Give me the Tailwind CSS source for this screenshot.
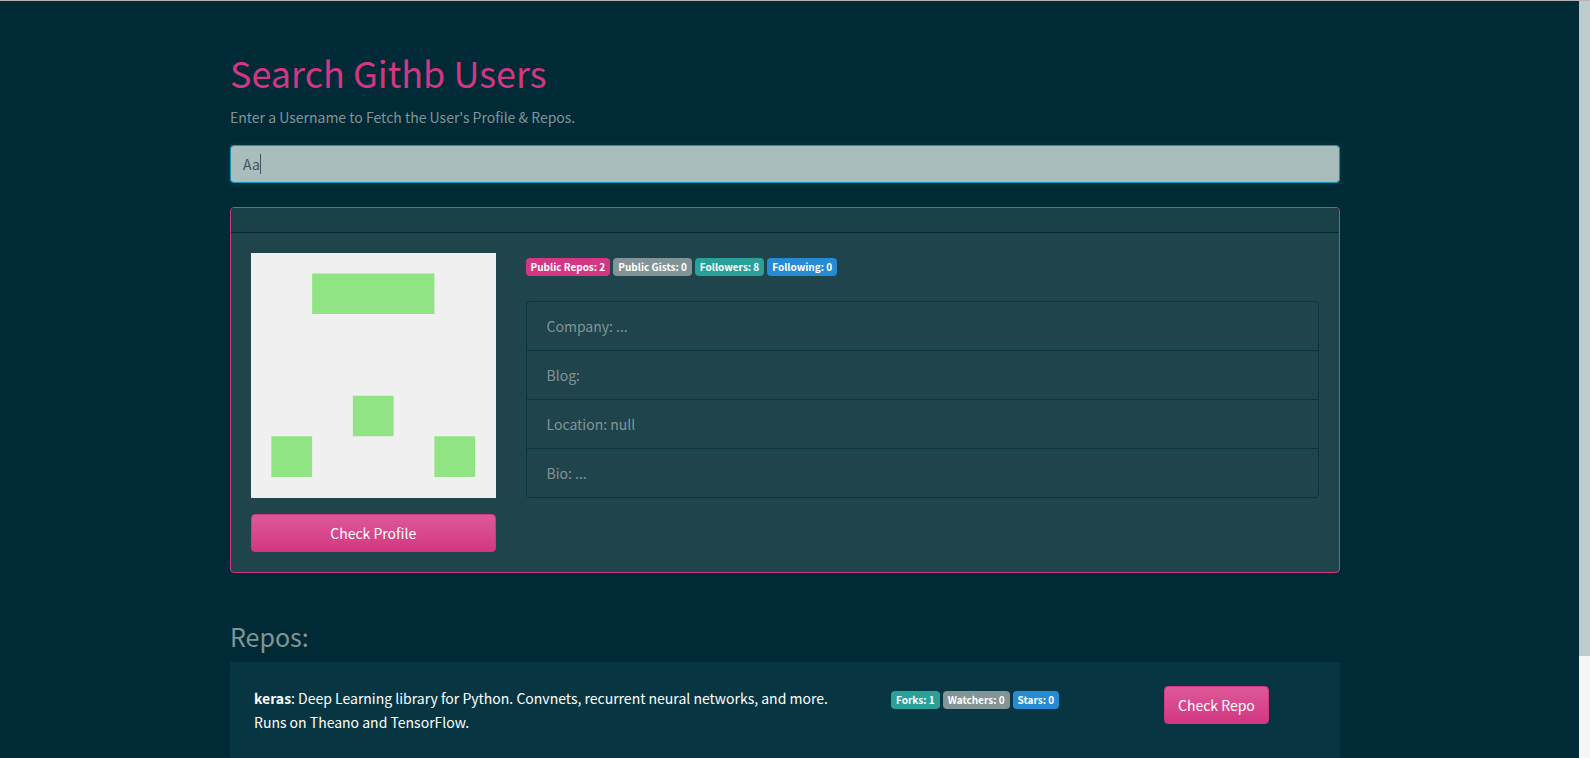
<!DOCTYPE html>
<html lang="en">
<head>
<meta charset="utf-8">
<meta name="viewport" content="width=device-width, initial-scale=1">
<title>Search Githb Users</title>
<script src="https://cdn.jsdelivr.net/npm/@tailwindcss/browser@4"></script>
</head>
<body class="flex h-screen overflow-hidden border-t border-[#b4b4b4] bg-[#002b36] font-['Noto_Sans_CJK_SC','Noto_Sans',sans-serif] text-[14px] leading-6 text-[#839496]">
  <div class="min-w-0 flex-1 overflow-hidden pr-[9px]">
    <main class="mx-auto max-w-[1140px] px-[15px] pt-12">
      <header>
        <h1 class="mb-2.5 text-[36px] leading-[46px] text-[#d33682]">Search Githb Users</h1>
        <label for="user" class="mb-4 block">Enter a Username to Fetch the User's Profile &amp; Repos.</label>
        <div class="relative">
          <input id="user" type="text" value="Aa" autocomplete="off" class="block h-[38px] w-full rounded border border-[#1391b6] bg-[#a9bdbd] px-3 text-[#495057] shadow-[0_0_4px_1px_rgba(42,161,152,0.15)] outline-none">
          <span aria-hidden="true" class="absolute top-[9px] left-[30px] h-5 w-px bg-[#495057]"></span>
        </div>
      </header>

      <section class="mt-6 rounded border border-[#d33682] bg-[#1f444c]">
        <div class="h-[25px] rounded-t-[3px] border-b border-[#002b36] bg-[#1a4048]"></div>
        <div class="grid grid-cols-4 gap-[30px] p-5">
          <div>
            <svg viewBox="0 0 420 420" class="block w-full bg-[#f0f0f0]" role="img" aria-label="Avatar">
              <path fill="#90e483" d="M105 35h210v70H105zM175 245h70v70h-70zM35 315h70v70H35zM315 315h70v70h-70z"/>
            </svg>
            <a href="#" class="mt-4 block h-[38px] rounded border border-[#d33682] bg-linear-to-b from-[#dd5897] to-[#d33682] py-1.5 text-center text-white">Check Profile</a>
          </div>
          <div class="col-span-3">
            <div class="flex h-6 items-center gap-[3px] pt-1 text-[10px] leading-[18px] font-bold text-white">
              <span class="rounded bg-[#d33682] px-[5px]">Public Repos: 2</span>
              <span class="rounded bg-[#839496] px-[5px]">Public Gists: 0</span>
              <span class="rounded bg-[#2aa198] px-[5px]">Followers: 8</span>
              <span class="rounded bg-[#268bd2] px-[5px]">Following: 0</span>
            </div>
            <ul class="mt-6 divide-y divide-[#073642] rounded border border-[#073642]">
              <li class="px-5 py-3">Company: ...</li>
              <li class="px-5 py-3">Blog:</li>
              <li class="px-5 py-3">Location: null</li>
              <li class="px-5 py-3">Bio: ...</li>
            </ul>
          </div>
        </div>
      </section>

      <h2 class="mt-[47px] mb-2.5 text-[25px] leading-8">Repos:</h2>
      <section class="grid grid-cols-12 gap-x-[30px] bg-[#073642] p-6 pb-12 text-white">
        <p class="col-span-7"><strong>keras</strong>: Deep Learning library for Python. Convnets, recurrent neural networks, and more. Runs on Theano and TensorFlow.</p>
        <div class="col-span-3 flex h-6 items-center gap-[3px] pt-1 text-[10px] leading-[18px] font-bold">
          <span class="rounded bg-[#2aa198] px-[5px]">Forks: 1</span>
          <span class="rounded bg-[#839496] px-[5px]">Watchers: 0</span>
          <span class="rounded bg-[#268bd2] px-[5px]">Stars: 0</span>
        </div>
        <div class="col-span-2">
          <a href="#" class="inline-block h-[38px] rounded border border-[#d33682] bg-linear-to-b from-[#dd5897] to-[#d33682] px-[13px] py-1.5">Check Repo</a>
        </div>
      </section>
    </main>
  </div>
  <div aria-hidden="true" class="w-[11px] shrink-0 bg-[#f5f5f5]">
    <div class="h-[86.5%] bg-[#bccccc]"></div>
  </div>
</body>
</html>
